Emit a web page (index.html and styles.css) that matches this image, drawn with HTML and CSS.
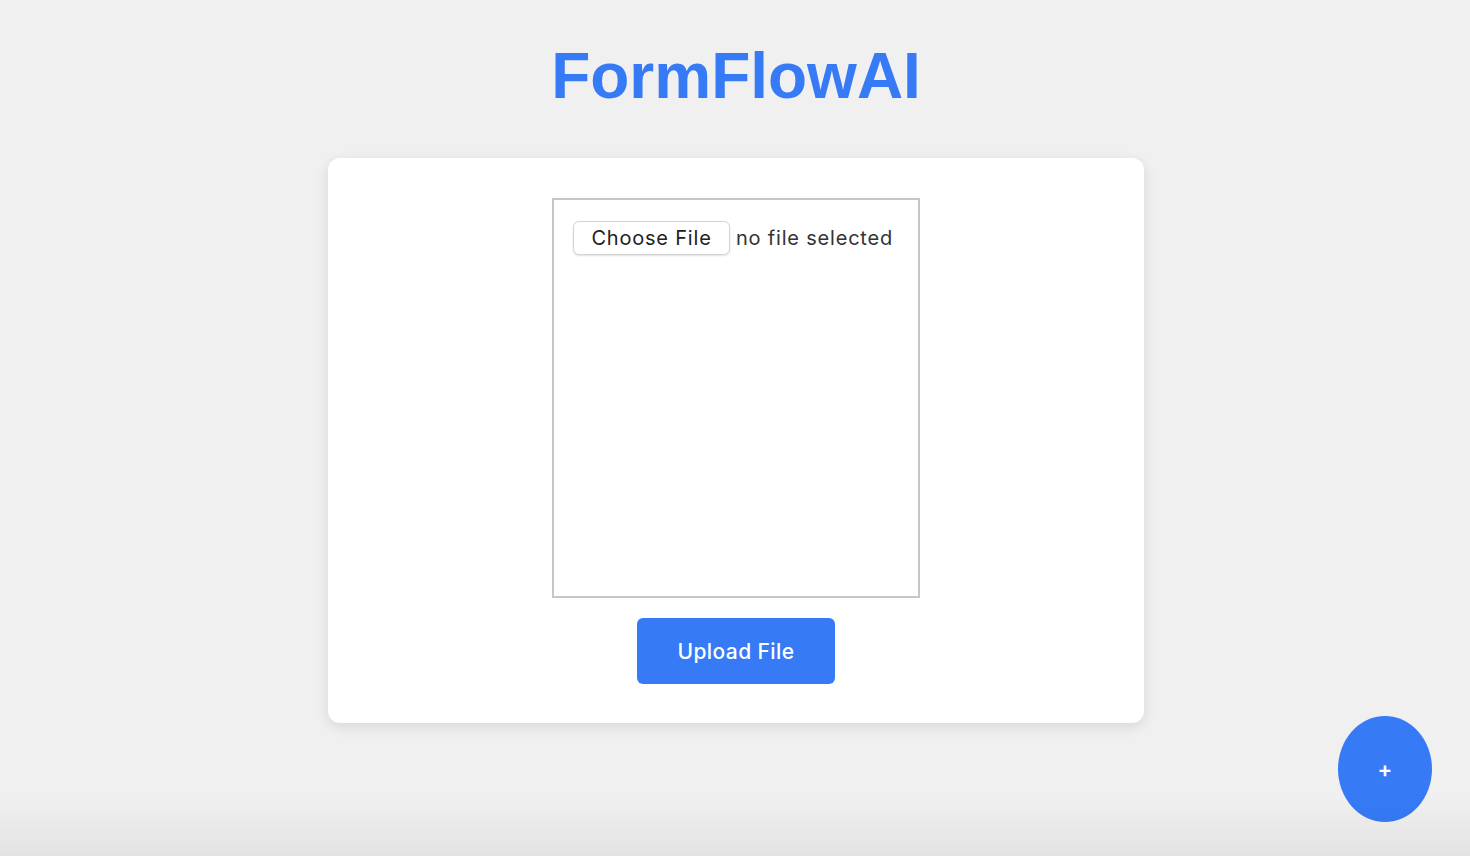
FILE: index.html
```html
<!DOCTYPE html>
<html lang="en">
<head>
<meta charset="utf-8">
<title>FormFlowAI</title>
<link rel="stylesheet" href="styles.css">
</head>
<body>
<main class="page">
  <h1 class="title">FormFlowAI</h1>
  <section class="card">
    <div class="dropzone">
      <div class="file-input">
        <span class="file-btn">Choose File</span>
        <span class="file-name">no file selected</span>
      </div>
    </div>
    <button class="upload-btn" type="button">Upload File</button>
  </section>
</main>
<button class="fab" type="button">+</button>
</body>
</html>
```

FILE: styles.css
```css
* { box-sizing: border-box; }
html, body { height: 100%; }
body {
  margin: 0;
  background: #f0f0f0;
  font-family: Inter, "Noto Sans", sans-serif;
  overflow: hidden;
}
body::after {
  content: "";
  position: fixed;
  left: 0; right: 0; bottom: 0;
  height: 60px;
  background: linear-gradient(to bottom, rgba(0,0,0,0), rgba(0,0,0,0.05));
  pointer-events: none;
}
.page {
  display: flex;
  flex-direction: column;
  align-items: center;
  padding-top: 38px;
  padding-left: 2px;
}
.title {
  margin: 0 0 44px;
  font-family: "Liberation Sans", Arial, sans-serif;
  font-weight: 700;
  font-size: 64px;
  line-height: 76px;
  color: #367bf5;
}
.card {
  width: 816px;
  background: #fff;
  border-radius: 12px;
  box-shadow: 0 4px 14px rgba(0,0,0,0.1);
  padding: 40px 40px 39px;
  display: flex;
  flex-direction: column;
  align-items: center;
  gap: 20px;
}
.dropzone {
  width: 368px;
  height: 400px;
  border: 2px solid #c6c6c6;
  padding: 21px 19px;
}
.file-input {
  display: flex;
  align-items: center;
  gap: 6px;
}
.file-btn {
  display: inline-flex;
  align-items: center;
  justify-content: center;
  width: 157px;
  height: 34px;
  border: 1px solid #d4d4d4;
  border-radius: 6px;
  background: #fff;
  box-shadow: 0 1px 2px rgba(0,0,0,0.12);
  font-size: 20px;
  letter-spacing: 0.8px;
  color: #222;
}
.file-name {
  font-size: 20px;
  letter-spacing: 0.8px;
  color: #333;
  white-space: nowrap;
}
.upload-btn {
  width: 198px;
  height: 66px;
  border: none;
  border-radius: 6px;
  background: #367bf5;
  color: #fff;
  font-family: Inter, "Noto Sans", sans-serif;
  font-size: 21px;
  font-weight: 500;
  letter-spacing: 0.4px;
}
.fab {
  position: fixed;
  right: 38px;
  bottom: 34px;
  width: 94px;
  height: 106px;
  border: none;
  border-radius: 50%;
  background: #367bf5;
  color: #fff;
  font-family: Inter, sans-serif;
  font-size: 22px;
  font-weight: 600;
  line-height: 1;
  padding: 0;
}
```
